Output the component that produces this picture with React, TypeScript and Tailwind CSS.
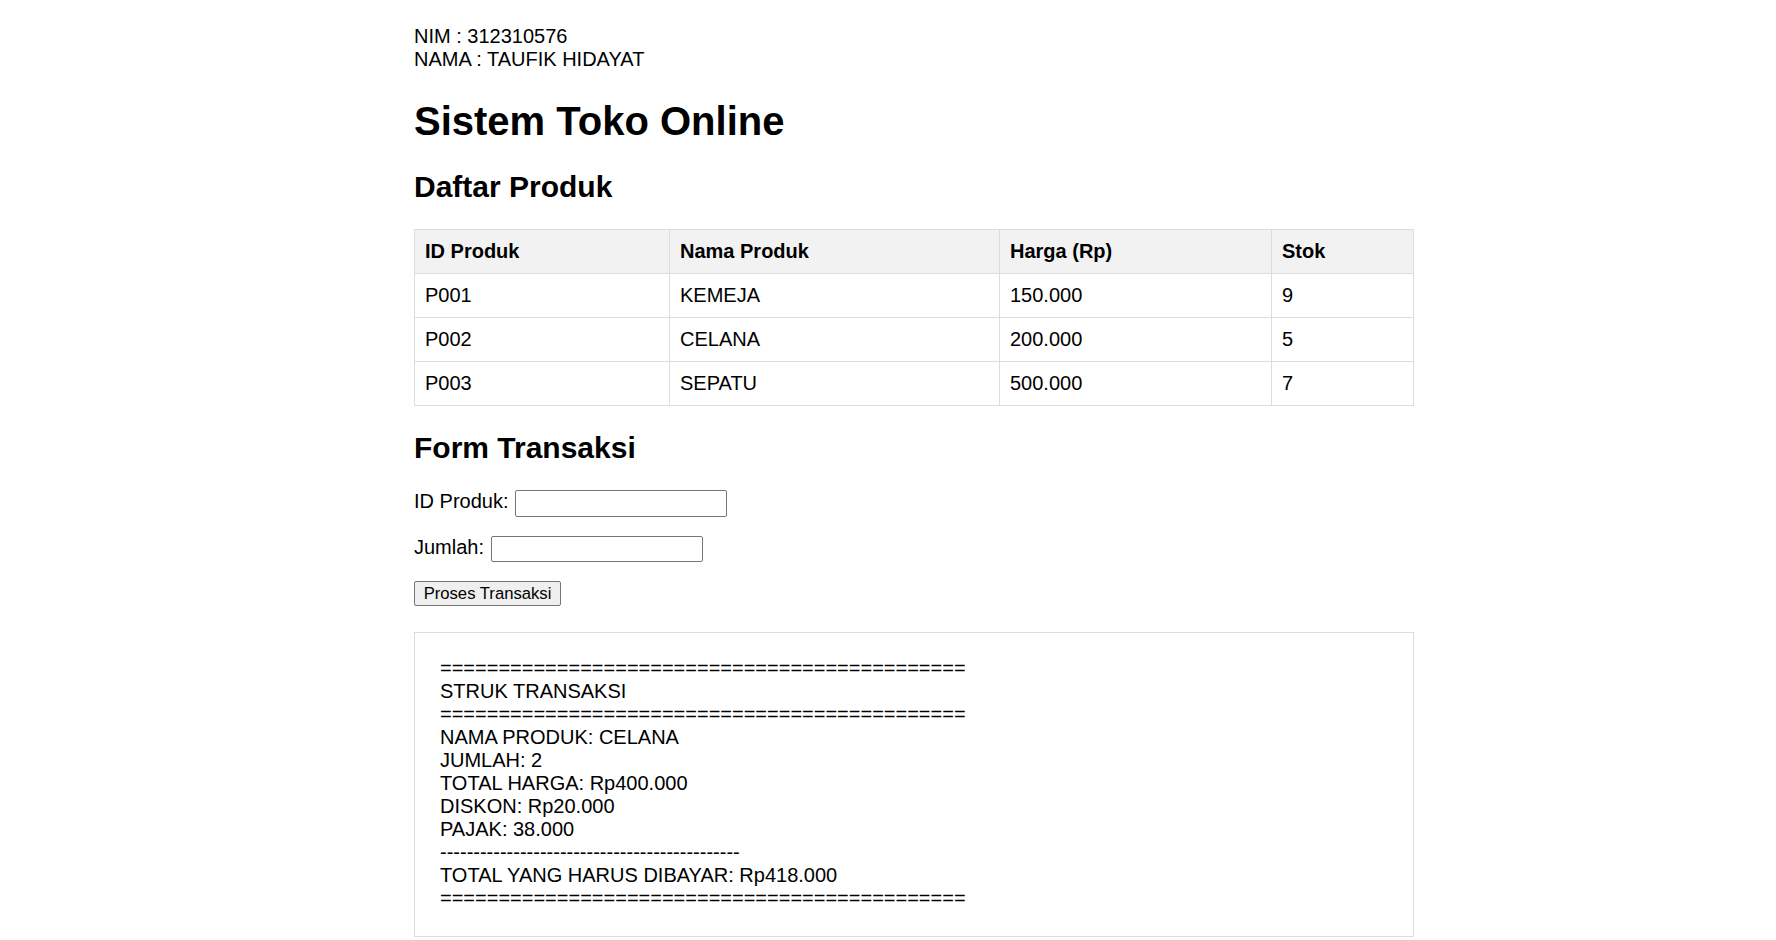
import { useState } from 'react';

const produk = [
  { id: 'P001', nama: 'KEMEJA', harga: '150.000', stok: 9 },
  { id: 'P002', nama: 'CELANA', harga: '200.000', stok: 5 },
  { id: 'P003', nama: 'SEPATU', harga: '500.000', stok: 7 },
];

const garis = '='.repeat(45);
const strip = '-'.repeat(45);

export default function App() {
  const [idProduk, setIdProduk] = useState('');
  const [jumlah, setJumlah] = useState('');

  const struk = [
    garis,
    'STRUK TRANSAKSI',
    garis,
    'NAMA PRODUK: CELANA',
    'JUMLAH: 2',
    'TOTAL HARGA: Rp400.000',
    'DISKON: Rp20.000',
    'PAJAK: 38.000',
    strip,
    'TOTAL YANG HARUS DIBAYAR: Rp418.000',
    garis,
  ];

  return (
    <main className="min-h-screen bg-white text-black font-['Liberation_Sans',Arial,sans-serif] text-[20px] leading-[23px]">
      <div className="w-[1000px] ml-[414px] pt-[25px] pb-[4px]">
        {/* identitas */}
        <div>
          <div>NIM : 312310576</div>
          <div>NAMA : TAUFIK HIDAYAT</div>
        </div>

        <h1 className="text-[40px] leading-[46px] font-bold mt-[27px] mb-[26px]">Sistem Toko Online</h1>

        <h2 className="text-[30px] leading-[34px] font-bold mb-[25px]">Daftar Produk</h2>

        <table className="w-full border-collapse">
          <thead>
            <tr className="bg-[#f2f2f2]">
              <th className="w-[255px] border border-[#dddddd] px-[10px] py-[10px] text-left font-bold">ID Produk</th>
              <th className="w-[330px] border border-[#dddddd] px-[10px] py-[10px] text-left font-bold">Nama Produk</th>
              <th className="w-[272px] border border-[#dddddd] px-[10px] py-[10px] text-left font-bold">Harga (Rp)</th>
              <th className="border border-[#dddddd] px-[10px] py-[10px] text-left font-bold">Stok</th>
            </tr>
          </thead>
          <tbody>
            {produk.map((p) => (
              <tr key={p.id}>
                <td className="border border-[#dddddd] px-[10px] py-[10px]">{p.id}</td>
                <td className="border border-[#dddddd] px-[10px] py-[10px]">{p.nama}</td>
                <td className="border border-[#dddddd] px-[10px] py-[10px]">{p.harga}</td>
                <td className="border border-[#dddddd] px-[10px] py-[10px]">{p.stok}</td>
              </tr>
            ))}
          </tbody>
        </table>

        <h2 className="text-[30px] leading-[34px] font-bold mt-[25px] mb-[25px]">Form Transaksi</h2>

        {/* form */}
        <div className="flex flex-col">
          <div className="flex items-start gap-[7px]">
            <label>ID Produk:</label>
            <input
              value={idProduk}
              onChange={(e) => setIdProduk(e.target.value)}
              className="w-[212px] h-[27px] border border-[#767676] rounded-[2px] bg-white px-[2px] text-[16px] outline-none"
            />
          </div>
          <div className="flex items-start gap-[7px] mt-[19px]">
            <label>Jumlah:</label>
            <input
              value={jumlah}
              onChange={(e) => setJumlah(e.target.value)}
              className="w-[212px] h-[26px] border border-[#767676] rounded-[2px] bg-white px-[2px] text-[16px] outline-none"
            />
          </div>
          <div className="mt-[19px]">
            <button className="w-[147px] h-[25px] border border-[#767676] rounded-[2px] bg-[#efefef] text-[16.67px] leading-[19px]">
              Proses Transaksi
            </button>
          </div>
        </div>

        {/* struk */}
        <div className="mt-[26px] border border-[#dddddd] pl-[25px] pr-[20px] pt-[24px] pb-[26px]">
          {struk.map((baris, i) => (
            <div key={i} className="whitespace-pre">{baris}</div>
          ))}
        </div>
      </div>
    </main>
  );
}
